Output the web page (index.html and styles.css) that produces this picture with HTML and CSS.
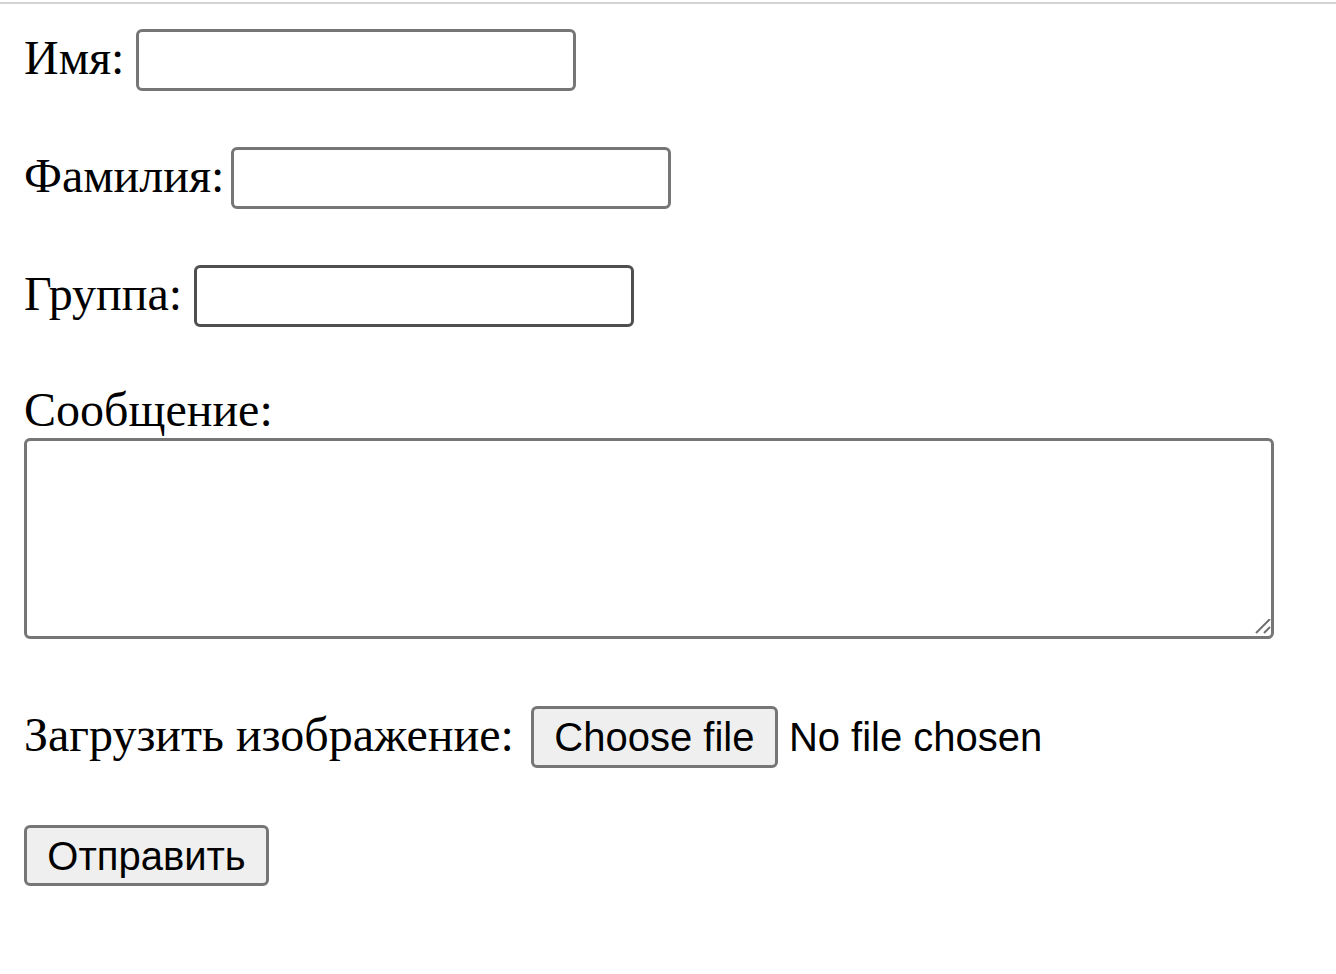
FILE: index.html
```html
<!DOCTYPE html>
<html lang="ru">
<head>
<meta charset="utf-8">
<title>Форма</title>
<link rel="stylesheet" href="styles.css">
</head>
<body>
<div class="topline"></div>
<form class="form">
  <div class="row">
    <label class="lbl" for="name">Имя:</label>
    <input class="field" id="name" type="text">
  </div>
  <div class="row">
    <label class="lbl lbl-surname" for="surname">Фамилия:</label>
    <input class="field" id="surname" type="text">
  </div>
  <div class="row">
    <label class="lbl" for="group">Группа:</label>
    <input class="field field-hover" id="group" type="text">
  </div>
  <div class="msg">
    <label class="lbl lbl-block" for="message">Сообщение:</label>
    <div class="ta-wrap">
      <textarea class="ta" id="message"></textarea>
      <svg class="grip" width="20" height="20" viewBox="0 0 20 20">
        <line x1="2" y1="14" x2="16" y2="0" stroke="#6f6f6f" stroke-width="2"/>
        <line x1="10" y1="14" x2="16" y2="8" stroke="#6f6f6f" stroke-width="2"/>
      </svg>
    </div>
  </div>
  <div class="row file-row">
    <label class="lbl lbl-file">Загрузить изображение:</label>
    <button class="file-btn" type="button">Choose file</button>
    <span class="file-text">No file chosen</span>
  </div>
  <button class="submit" type="submit">Отправить</button>
</form>
</body>
</html>
```

FILE: styles.css
```css
html, body {
  margin: 0;
  padding: 0;
  background: #ffffff;
}

body {
  font-family: "Liberation Serif", "Times New Roman", serif;
  color: #000000;
}

.topline {
  margin-top: 2px;
  height: 2px;
  background: #d3d3d3;
}

.form {
  padding: 25px 24px 0 24px;
  display: flex;
  flex-direction: column;
  align-items: flex-start;
}

.row {
  display: flex;
  align-items: center;
  height: 62px;
  margin-bottom: 56px;
}

.lbl {
  font-size: 48px;
  line-height: 53px;
  padding-bottom: 6px;
  margin-right: 12px;
  white-space: nowrap;
}

.lbl-surname {
  margin-right: 7px;
}

.lbl-file {
  margin-right: 17px;
}

.field {
  box-sizing: border-box;
  width: 440px;
  height: 62px;
  margin: 0;
  padding: 0 6px;
  border: 3px solid #767676;
  border-radius: 6px;
  background: #ffffff;
  font-family: "Liberation Sans", Arial, sans-serif;
  font-size: 40px;
  outline: none;
}

.field-hover {
  border-color: #4f4f4f;
}

.msg {
  display: flex;
  flex-direction: column;
  align-items: flex-start;
}

.lbl-block {
  padding-bottom: 0;
  margin-right: 0;
}

.ta-wrap {
  position: relative;
  margin-top: 2px;
  width: 1250px;
  height: 201px;
}

.ta {
  box-sizing: border-box;
  display: block;
  width: 1250px;
  height: 201px;
  margin: 0;
  border: 3px solid #767676;
  border-radius: 6px;
  background: #ffffff;
  resize: none;
  outline: none;
  font-family: "Liberation Mono", monospace;
  font-size: 40px;
}

.grip {
  position: absolute;
  left: 1230px;
  top: 181px;
}

.file-row {
  margin-top: 67px;
  margin-bottom: 57px;
}

.file-btn,
.submit {
  box-sizing: border-box;
  height: 62px;
  margin: 0;
  padding: 0;
  border: 3px solid #767676;
  border-radius: 6px;
  background: #efefef;
  color: #000000;
  font-family: "Liberation Sans", Arial, sans-serif;
  font-size: 40px;
  line-height: 46px;
  text-align: center;
  cursor: default;
}

.file-btn {
  width: 247px;
}

.file-text {
  margin-left: 11px;
  font-family: "Liberation Sans", Arial, sans-serif;
  font-size: 40px;
  line-height: 46px;
  white-space: nowrap;
}

.submit {
  width: 245px;
  height: 61px;
}
```
